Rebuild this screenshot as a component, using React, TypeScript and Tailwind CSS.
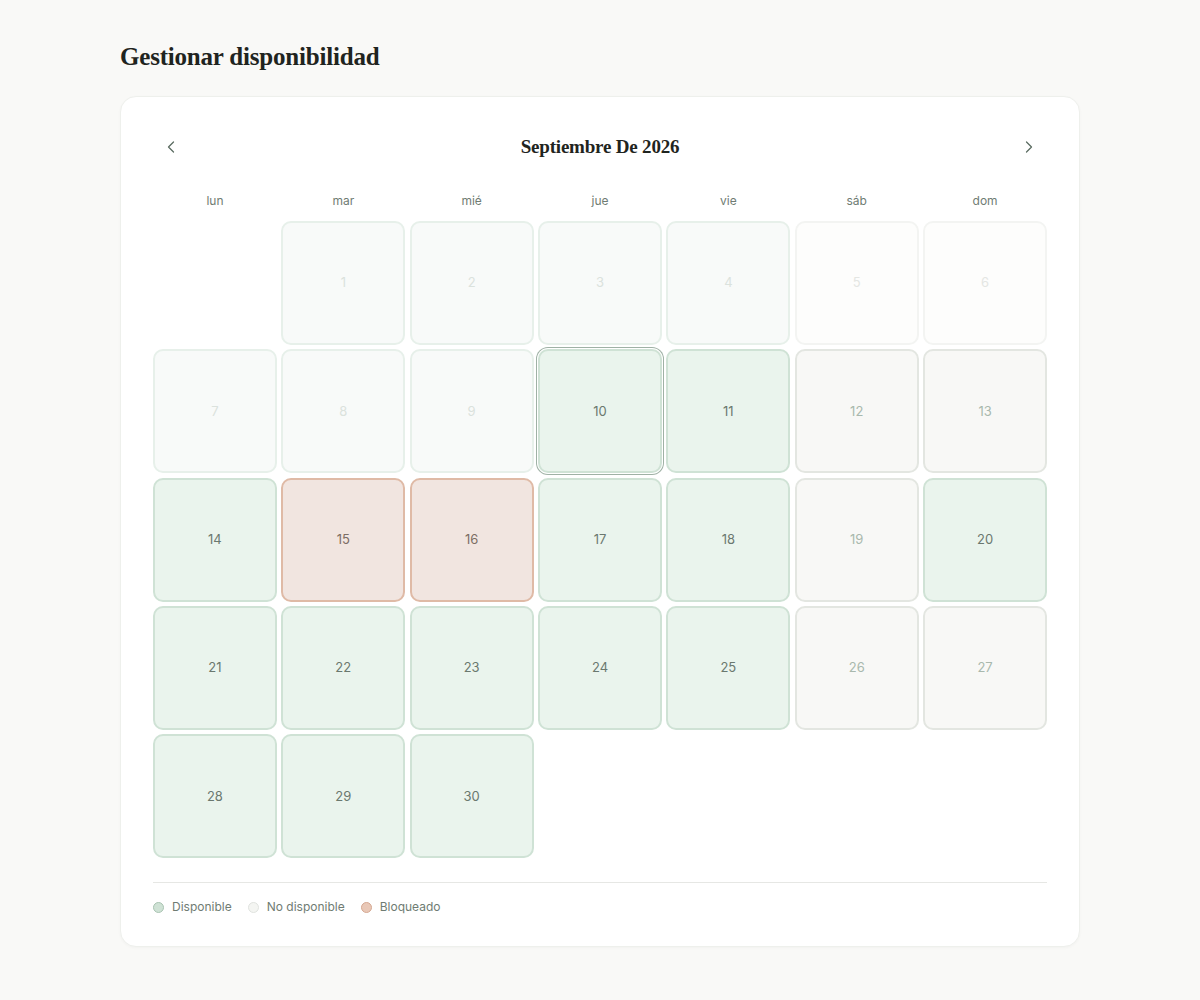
import { ChevronLeft, ChevronRight } from "lucide-react";

type DayState = "past" | "faint" | "available" | "unavailable" | "blocked";

const WEEKDAYS = ["lun", "mar", "mié", "jue", "vie", "sáb", "dom"];

// September 2026 starts on a Tuesday, so one blank before the 1st.
const LEAD = 1;

const STATE: Record<number, DayState> = {
  1: "past", 2: "past", 3: "past", 4: "past", 5: "faint", 6: "faint",
  7: "past", 8: "past", 9: "past", 10: "available", 11: "available", 12: "unavailable", 13: "unavailable",
  14: "available", 15: "blocked", 16: "blocked", 17: "available", 18: "available", 19: "unavailable", 20: "available",
  21: "available", 22: "available", 23: "available", 24: "available", 25: "available", 26: "unavailable", 27: "unavailable",
  28: "available", 29: "available", 30: "available",
};

const CELL_STYLE: Record<DayState, string> = {
  past: "border-[#e7f0ea] bg-[#f8faf9] text-[#dbe2dd]",
  faint: "border-[#f3f4f2] bg-[#fdfdfc] text-[#e4e6e3]",
  available: "border-[#cfe2d5] bg-[#eaf4ed] text-[#6a786f]",
  unavailable: "border-[#e3e6e1] bg-[#f8f8f6] text-[#a9b8ad]",
  blocked: "border-[#dfbaa6] bg-[#f1e5e0] text-[#7c6d64]",
};

const SELECTED = 10;

export default function App() {
  const cells: (number | null)[] = [
    ...Array.from({ length: LEAD }, () => null),
    ...Array.from({ length: 30 }, (_, i) => i + 1),
  ];

  return (
    <div className="min-h-[1000px] bg-[#f9f9f7] px-[120px] pt-[40px] font-['Inter',sans-serif]">
      <h1 className="font-['Liberation_Serif',serif] text-[25px] font-bold leading-[34px] tracking-[-0.2px] text-[#1f2420]">
        Gestionar disponibilidad
      </h1>

      <div className="mt-[22px] rounded-2xl border border-[#eef0ec] bg-white px-8 pb-[31px] pt-8 shadow-[0_1px_3px_rgba(0,0,0,0.03)]">
        {/* Month navigation */}
        <div className="mb-6 flex h-9 items-center justify-between">
          <button aria-label="Mes anterior" className="flex h-9 w-9 items-center justify-center text-[#5b6c61]">
            <ChevronLeft className="h-5 w-5" strokeWidth={1.5} />
          </button>
          <h2 className="font-['Liberation_Serif',serif] text-[19px] font-bold tracking-[-0.2px] text-[#1f2420]">
            Septiembre De 2026
          </h2>
          <button aria-label="Mes siguiente" className="flex h-9 w-9 items-center justify-center text-[#5b6c61]">
            <ChevronRight className="h-5 w-5" strokeWidth={1.5} />
          </button>
        </div>

        {/* Weekday labels */}
        <div className="mb-2 grid grid-cols-7 gap-[4.5px]">
          {WEEKDAYS.map((d) => (
            <div key={d} className="flex h-6 items-center justify-center text-[12px] text-[#6f7c73]">
              {d}
            </div>
          ))}
        </div>

        {/* Day grid */}
        <div className="grid grid-cols-7 gap-[4.5px]">
          {cells.map((day, i) =>
            day === null ? (
              <div key={`e${i}`} className="aspect-square" />
            ) : (
              <button
                key={day}
                className={`flex aspect-square items-center justify-center rounded-[10px] border-2 text-[13px] ${CELL_STYLE[STATE[day]]} ${
                  day === SELECTED ? "ring-1 ring-[#9fb1a5] ring-offset-1 ring-offset-white" : ""
                }`}
              >
                {day}
              </button>
            ),
          )}
        </div>

        {/* Legend */}
        <div className="mt-6 flex items-center gap-4 border-t border-[#e6e7e4] pt-4 text-[12px] leading-4 text-[#6f7c73]">
          <Legend dot="border-[#a9c4b2] bg-[#cfe2d5]" label="Disponible" />
          <Legend dot="border-[#e0e3df] bg-[#f4f5f2]" label="No disponible" />
          <Legend dot="border-[#d5a892] bg-[#e9c8b7]" label="Bloqueado" />
        </div>
      </div>
    </div>
  );
}

function Legend({ dot, label }: { dot: string; label: string }) {
  return (
    <div className="flex items-center gap-2">
      <span className={`h-[11px] w-[11px] rounded-full border ${dot}`} />
      <span>{label}</span>
    </div>
  );
}
